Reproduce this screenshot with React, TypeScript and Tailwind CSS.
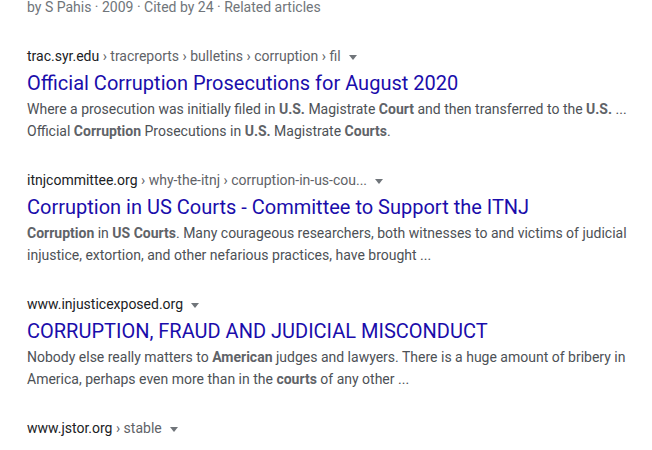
import React from 'react';

type Part = { t: string; b?: boolean };

interface Result {
    site: string;
    crumbs: string[];
    title: string;
    lines: Part[][];
}

const results: Result[] = [
    {
        site: 'trac.syr.edu',
        crumbs: ['tracreports', 'bulletins', 'corruption', 'fil'],
        title: 'Official Corruption Prosecutions for August 2020',
        lines: [
            [
                { t: 'Where a prosecution was initially filed in ' },
                { t: 'U.S.', b: true },
                { t: ' Magistrate ' },
                { t: 'Court', b: true },
                { t: ' and then transferred to the ' },
                { t: 'U.S.', b: true },
                { t: ' ...' },
            ],
            [
                { t: 'Official ' },
                { t: 'Corruption', b: true },
                { t: ' Prosecutions in ' },
                { t: 'U.S.', b: true },
                { t: ' Magistrate ' },
                { t: 'Courts', b: true },
                { t: '.' },
            ],
        ],
    },
    {
        site: 'itnjcommittee.org',
        crumbs: ['why-the-itnj', 'corruption-in-us-cou...'],
        title: 'Corruption in US Courts - Committee to Support the ITNJ',
        lines: [
            [
                { t: 'Corruption', b: true },
                { t: ' in ' },
                { t: 'US Courts', b: true },
                { t: '. Many courageous researchers, both witnesses to and victims of judicial' },
            ],
            [{ t: 'injustice, extortion, and other nefarious practices, have brought ...' }],
        ],
    },
    {
        site: 'www.injusticexposed.org',
        crumbs: [],
        title: 'CORRUPTION, FRAUD AND JUDICIAL MISCONDUCT',
        lines: [
            [
                { t: 'Nobody else really matters to ' },
                { t: 'American', b: true },
                { t: ' judges and lawyers. There is a huge amount of bribery in' },
            ],
            [
                { t: 'America, perhaps even more than in the ' },
                { t: 'courts', b: true },
                { t: ' of any other ...' },
            ],
        ],
    },
];

function Caret() {
    return (
        <svg width="8" height="5" viewBox="0 0 8 5" className="inline-block ml-[8px] align-middle">
            <path d="M0 0 L8 0 L4 5 Z" fill="#70757a" />
        </svg>
    );
}

function UrlRow({ site, crumbs }: { site: string; crumbs: string[] }) {
    return (
        <div className="h-[20px] text-[14px] leading-[20px] whitespace-nowrap">
            <span className="text-[#202124]">{site}</span>
            {crumbs.map((c) => (
                <span key={c} className="text-[#5f6368]">
                    {' › ' + c}
                </span>
            ))}
            <Caret />
        </div>
    );
}

export default function App() {
    return (
        <div
            className="w-[652px] h-[450px] overflow-hidden bg-white pl-[27px]"
            style={{ fontFamily: 'Roboto, "Liberation Sans", sans-serif' }}
        >
            <div className="-mt-[4px] h-[22px] text-[14px] leading-[22px] text-[#70757a]">
                by S Pahis · 2009 · Cited by 24 · Related articles
            </div>

            {results.map((r) => (
                <div key={r.site} className="mt-[28px] mb-[1px]">
                    <UrlRow site={r.site} crumbs={r.crumbs} />
                    <div className="mt-[4px] h-[26px] text-[20px] leading-[26px] text-[#1a0dab]">
                        {r.title}
                    </div>
                    <div className="mt-[2px] text-[14px] leading-[22px] text-[#4d5156]">
                        {r.lines.map((line, i) => (
                            <div key={i} className="h-[22px] whitespace-nowrap">
                                {line.map((p, j) =>
                                    p.b ? (
                                        <b key={j} className="font-bold text-[#5f6368]">
                                            {p.t}
                                        </b>
                                    ) : (
                                        <span key={j}>{p.t}</span>
                                    ),
                                )}
                            </div>
                        ))}
                    </div>
                </div>
            ))}

            <div className="mt-[28px]">
                <UrlRow site="www.jstor.org" crumbs={['stable']} />
            </div>
        </div>
    );
}
